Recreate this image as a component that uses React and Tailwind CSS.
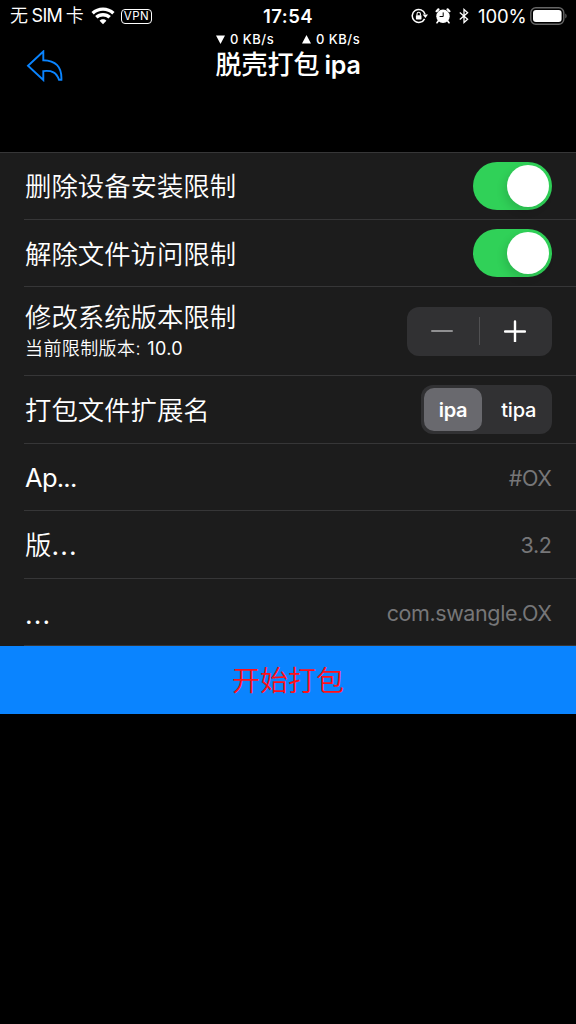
import React from "react";

function WifiIcon() {
  return (
    <svg width="24" height="18" viewBox="0 0 24 18" fill="none" stroke="white" strokeWidth="3.4">
      <path d="M1.6 6.2C7.4 0.8 16.6 0.8 22.4 6.2" />
      <path d="M5.3 10.3C9 6.8 15 6.8 18.7 10.3" />
      <path d="M12 17.2L8.6 13.7C10.5 11.9 13.5 11.9 15.4 13.7Z" fill="white" stroke="none" />
    </svg>
  );
}

function RotationLockIcon() {
  return (
    <svg width="18" height="16" viewBox="0 0 18 16" fill="none">
      <path d="M13.6 10.8A6.5 6.5 0 1 1 14 6.2" stroke="white" strokeWidth="1.5" />
      <path d="M11.6 6.4H17L14.4 10Z" fill="white" />
      <rect x="4.9" y="7.2" width="5.6" height="4.2" rx="0.6" fill="white" />
      <path d="M6 7.5V6a1.7 1.7 0 0 1 3.4 0V7.5" stroke="white" strokeWidth="1.1" />
    </svg>
  );
}

function AlarmIcon() {
  return (
    <svg width="16" height="16" viewBox="0 0 16 16" fill="none">
      <path d="M1.6 3.2L3.4 1.4M14.4 3.2L12.6 1.4" stroke="white" strokeWidth="2.2" strokeLinecap="round" />
      <path d="M3.6 12.6L2 14.7M12.4 12.6L14 14.7" stroke="white" strokeWidth="1.7" strokeLinecap="round" />
      <circle cx="8" cy="8.2" r="6.7" fill="white" />
      <path d="M8.2 4.4V8.5H4.6" stroke="black" strokeWidth="1" />
    </svg>
  );
}

function BluetoothIcon() {
  return (
    <svg width="10" height="16" viewBox="0 0 10 16" fill="none" stroke="white" strokeWidth="1.3">
      <path d="M0.8 4.6L8.6 11.2L5 14.5V1.5L8.6 4.8L0.8 11.4" />
    </svg>
  );
}

function BatteryIcon() {
  return (
    <svg width="38" height="18" viewBox="0 0 38 18" fill="none">
      <rect x="0.8" y="0.8" width="33" height="16.4" rx="5" stroke="#666666" strokeWidth="1.4" />
      <rect x="3" y="3" width="28.6" height="12" rx="3" fill="white" />
      <path d="M35.3 6.5C37 7.3 37 10.7 35.3 11.5Z" fill="#666666" />
    </svg>
  );
}

function BackIcon() {
  return (
    <svg width="38" height="32" viewBox="0 0 38 32" fill="none" stroke="#0a84ff" strokeWidth="1.9">
      <path d="M17.3 1.5L2 15.8L17.3 30V21.1C26 20.2 30.5 22.3 33 29.8H35.4C36 16.8 29.5 10.4 17.3 10.2Z" />
    </svg>
  );
}

function Header() {
  return (
    <header className="h-[152px]">
      <div className="grid h-8 grid-cols-[200px_176px_200px] items-center text-white">
        <div className="flex items-center pl-[10px]">
          <span className="w-[81px] whitespace-nowrap text-[18px] font-[350] leading-8 [word-spacing:-1.5px]">无 <span className="font-normal tracking-[-0.7px]">SIM</span> 卡</span>
          <WifiIcon />
          <span className="ml-[6px] flex h-[15px] w-[31px] items-center justify-center rounded-[4px] border-[1.5px] border-white pt-px text-[11.5px] leading-none tracking-[0.5px]">VPN</span>
        </div>
        <div className="text-center text-[18.5px] font-semibold leading-8 tracking-[0.5px]">17:54</div>
        <div className="flex items-center pl-[35px]">
          <RotationLockIcon />
          <span className="ml-[6px]"><AlarmIcon /></span>
          <span className="ml-[8px]"><BluetoothIcon /></span>
          <span className="ml-[9px] w-[52px] text-[18.5px] leading-8 tracking-[-0.1px]">100%</span>
          <BatteryIcon />
        </div>
      </div>
      <div className="flex h-[14px] items-center pl-[216px] text-[13px] font-medium leading-[14px] text-white">
        <svg width="9" height="9" viewBox="0 0 9 9"><path d="M0 0.5H9L4.5 9Z" fill="white" /></svg>
        <span className="ml-[5px] w-[72px] tracking-[0.5px]">0 KB/s</span>
        <svg width="9" height="9" viewBox="0 0 9 9"><path d="M0 8.5H9L4.5 0Z" fill="white" /></svg>
        <span className="ml-[5px] tracking-[0.5px]">0 KB/s</span>
      </div>
      <div className="grid grid-cols-[200px_176px_200px] items-start">
        <div className="pl-[25.5px] pt-1"><BackIcon /></div>
        <h1 className="whitespace-nowrap pl-[15.5px] text-[26px] font-medium leading-[38px] text-white">脱壳打包<span className="ml-[5px] text-[25px] font-semibold tracking-[-0.2px]">ipa</span></h1>
      </div>
    </header>
  );
}

function Toggle() {
  return (
    <div className="flex h-12 w-[78.5px] items-center justify-end rounded-full bg-[#30d158] pr-[3px]">
      <div className="size-[42px] rounded-full bg-white shadow-[-3px_4px_8px_rgba(0,0,0,0.12)]" />
    </div>
  );
}

function Row({ height, children }) {
  return (
    <div className={`${height} pl-6`}>
      <div className="flex h-full items-center justify-between border-b border-[#363637] pl-px pr-[24.5px]">
        {children}
      </div>
    </div>
  );
}

const label = "text-[26.4px] font-[350] leading-9 text-white";
const value = "pt-px text-[21.5px] leading-8 text-[#767678] tracking-[-0.4px]";

export default function App() {
  return (
    <div className="min-h-screen w-[576px] bg-black font-['Inter','Noto_Sans_CJK_SC',sans-serif]">
      <Header />
      <main className="border-t border-[#363637] bg-[#1c1c1c]">
        <Row height="h-[67px]">
          <span className={label}>删除设备安装限制</span>
          <Toggle />
        </Row>
        <Row height="h-[67px]">
          <span className={`${label} pt-px`}>解除文件访问限制</span>
          <Toggle />
        </Row>
        <Row height="h-[89px]">
          <div className="flex flex-col">
            <span className={label}>修改系统版本限制</span>
            <span className="text-[18px] font-[350] leading-7 tracking-[0.4px] text-white">当前限制版本: <span className="ml-px font-normal tracking-[0.3px]">10.0</span></span>
          </div>
          <div className="flex h-[49px] w-[144.5px] items-center rounded-[12px] bg-[#313133]">
            <div className="flex w-[71.5px] justify-center pr-[2px]">
              <svg width="22" height="22" viewBox="0 0 22 22"><path d="M1 11H21" stroke="#909092" strokeWidth="2" strokeLinecap="round" /></svg>
            </div>
            <div className="h-7 w-px bg-[#505052]" />
            <div className="flex flex-1 justify-center pr-px">
              <svg width="22" height="22" viewBox="0 0 22 22"><path d="M1 11.5H21M11 1.5V21.5" stroke="white" strokeWidth="2.4" strokeLinecap="round" /></svg>
            </div>
          </div>
        </Row>
        <Row height="h-[68px]">
          <span className={`${label} pt-px`}>打包文件扩展名</span>
          <div className="flex h-[49px] w-[130.5px] rounded-[12px] bg-[#313133] p-[3px] text-[20px] text-white">
            <div className="flex w-[58px] items-center justify-center rounded-[10px] bg-[#69696e] font-semibold tracking-[-0.3px]">ipa</div>
            <div className="flex flex-1 items-center justify-center pl-[7px] font-medium tracking-[-0.2px]">tipa</div>
          </div>
        </Row>
        <Row height="h-[67px]">
          <span className="pt-[2px] text-[25.5px] leading-9 tracking-[-0.7px] text-white">Ap<span className="tracking-[-0.8px]">...</span></span>
          <span className={value}>#OX</span>
        </Row>
        <Row height="h-[68px]">
          <span className={`${label} pt-px`}>版<span className="font-normal tracking-[1.2px]">...</span></span>
          <span className={value}>3.2</span>
        </Row>
        <Row height="h-[67px]">
          <span className={`${label} pt-[3px]`}><span className="font-normal tracking-[1.2px]">...</span></span>
          <span className={value}>com.swangle.OX</span>
        </Row>
      </main>
      <button className="flex h-[67.5px] w-full items-center justify-center bg-[#0a84ff] pt-[3px] text-[28px] font-[350] text-[#ff1018]">开始打包</button>
    </div>
  );
}
